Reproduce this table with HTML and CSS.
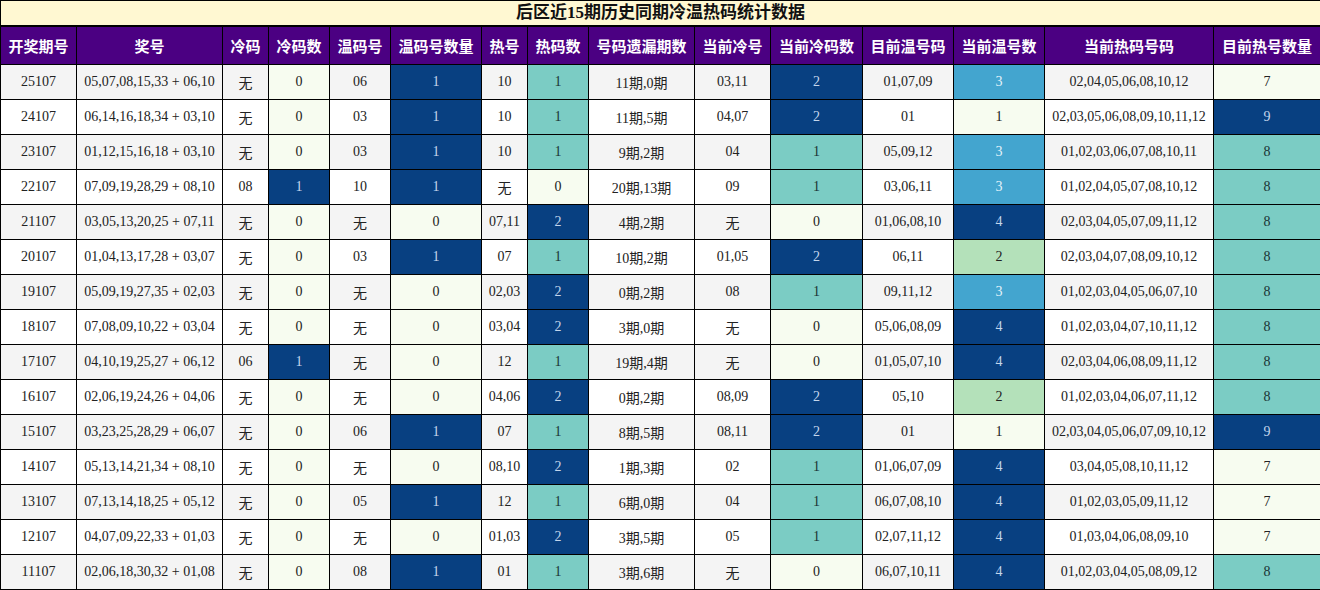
FILE: index.html
```html
<!DOCTYPE html>
<html lang="zh-CN">
<head>
<meta charset="utf-8">
<title>后区近15期历史同期冷温热码统计数据</title>
<link rel="stylesheet" href="styles.css">
</head>
<body>
<table class="stats">
<colgroup>
<col class="w76"><col class="w146"><col class="w46"><col class="w61"><col class="w61"><col class="w91"><col class="w46"><col class="w61"><col class="w106"><col class="w76"><col class="w92"><col class="w91"><col class="w91"><col class="w169"><col class="w107">
</colgroup>
<thead>
<tr class="title-row"><th colspan="15" class="title">后区近15期历史同期冷温热码统计数据</th></tr>
<tr class="head-row">
<th>开奖期号</th><th>奖号</th><th>冷码</th><th>冷码数</th><th>温码号</th><th>温码号数量</th><th>热号</th><th>热码数</th><th>号码遗漏期数</th><th>当前冷号</th><th>当前冷码数</th><th>目前温号码</th><th>当前温号数</th><th>当前热码号码</th><th>目前热号数量</th>
</tr>
</thead>
<tbody>
<tr class="odd"><td>25107</td><td>05,07,08,15,33 + 06,10</td><td>无</td><td class="c0">0</td><td>06</td><td class="c4">1</td><td>10</td><td class="c2">1</td><td>11期,0期</td><td>03,11</td><td class="c4">2</td><td>01,07,09</td><td class="c3">3</td><td>02,04,05,06,08,10,12</td><td class="c0">7</td></tr>
<tr class="even"><td>24107</td><td>06,14,16,18,34 + 03,10</td><td>无</td><td class="c0">0</td><td>03</td><td class="c4">1</td><td>10</td><td class="c2">1</td><td>11期,5期</td><td>04,07</td><td class="c4">2</td><td>01</td><td class="c0">1</td><td>02,03,05,06,08,09,10,11,12</td><td class="c4">9</td></tr>
<tr class="odd"><td>23107</td><td>01,12,15,16,18 + 03,10</td><td>无</td><td class="c0">0</td><td>03</td><td class="c4">1</td><td>10</td><td class="c2">1</td><td>9期,2期</td><td>04</td><td class="c2">1</td><td>05,09,12</td><td class="c3">3</td><td>01,02,03,06,07,08,10,11</td><td class="c2">8</td></tr>
<tr class="even"><td>22107</td><td>07,09,19,28,29 + 08,10</td><td>08</td><td class="c4">1</td><td>10</td><td class="c4">1</td><td>无</td><td class="c0">0</td><td>20期,13期</td><td>09</td><td class="c2">1</td><td>03,06,11</td><td class="c3">3</td><td>01,02,04,05,07,08,10,12</td><td class="c2">8</td></tr>
<tr class="odd"><td>21107</td><td>03,05,13,20,25 + 07,11</td><td>无</td><td class="c0">0</td><td>无</td><td class="c0">0</td><td>07,11</td><td class="c4">2</td><td>4期,2期</td><td>无</td><td class="c0">0</td><td>01,06,08,10</td><td class="c4">4</td><td>02,03,04,05,07,09,11,12</td><td class="c2">8</td></tr>
<tr class="even"><td>20107</td><td>01,04,13,17,28 + 03,07</td><td>无</td><td class="c0">0</td><td>03</td><td class="c4">1</td><td>07</td><td class="c2">1</td><td>10期,2期</td><td>01,05</td><td class="c4">2</td><td>06,11</td><td class="c1">2</td><td>02,03,04,07,08,09,10,12</td><td class="c2">8</td></tr>
<tr class="odd"><td>19107</td><td>05,09,19,27,35 + 02,03</td><td>无</td><td class="c0">0</td><td>无</td><td class="c0">0</td><td>02,03</td><td class="c4">2</td><td>0期,2期</td><td>08</td><td class="c2">1</td><td>09,11,12</td><td class="c3">3</td><td>01,02,03,04,05,06,07,10</td><td class="c2">8</td></tr>
<tr class="even"><td>18107</td><td>07,08,09,10,22 + 03,04</td><td>无</td><td class="c0">0</td><td>无</td><td class="c0">0</td><td>03,04</td><td class="c4">2</td><td>3期,0期</td><td>无</td><td class="c0">0</td><td>05,06,08,09</td><td class="c4">4</td><td>01,02,03,04,07,10,11,12</td><td class="c2">8</td></tr>
<tr class="odd"><td>17107</td><td>04,10,19,25,27 + 06,12</td><td>06</td><td class="c4">1</td><td>无</td><td class="c0">0</td><td>12</td><td class="c2">1</td><td>19期,4期</td><td>无</td><td class="c0">0</td><td>01,05,07,10</td><td class="c4">4</td><td>02,03,04,06,08,09,11,12</td><td class="c2">8</td></tr>
<tr class="even"><td>16107</td><td>02,06,19,24,26 + 04,06</td><td>无</td><td class="c0">0</td><td>无</td><td class="c0">0</td><td>04,06</td><td class="c4">2</td><td>0期,2期</td><td>08,09</td><td class="c4">2</td><td>05,10</td><td class="c1">2</td><td>01,02,03,04,06,07,11,12</td><td class="c2">8</td></tr>
<tr class="odd"><td>15107</td><td>03,23,25,28,29 + 06,07</td><td>无</td><td class="c0">0</td><td>06</td><td class="c4">1</td><td>07</td><td class="c2">1</td><td>8期,5期</td><td>08,11</td><td class="c4">2</td><td>01</td><td class="c0">1</td><td>02,03,04,05,06,07,09,10,12</td><td class="c4">9</td></tr>
<tr class="even"><td>14107</td><td>05,13,14,21,34 + 08,10</td><td>无</td><td class="c0">0</td><td>无</td><td class="c0">0</td><td>08,10</td><td class="c4">2</td><td>1期,3期</td><td>02</td><td class="c2">1</td><td>01,06,07,09</td><td class="c4">4</td><td>03,04,05,08,10,11,12</td><td class="c0">7</td></tr>
<tr class="odd"><td>13107</td><td>07,13,14,18,25 + 05,12</td><td>无</td><td class="c0">0</td><td>05</td><td class="c4">1</td><td>12</td><td class="c2">1</td><td>6期,0期</td><td>04</td><td class="c2">1</td><td>06,07,08,10</td><td class="c4">4</td><td>01,02,03,05,09,11,12</td><td class="c0">7</td></tr>
<tr class="even"><td>12107</td><td>04,07,09,22,33 + 01,03</td><td>无</td><td class="c0">0</td><td>无</td><td class="c0">0</td><td>01,03</td><td class="c4">2</td><td>3期,5期</td><td>05</td><td class="c2">1</td><td>02,07,11,12</td><td class="c4">4</td><td>01,03,04,06,08,09,10</td><td class="c0">7</td></tr>
<tr class="odd"><td>11107</td><td>02,06,18,30,32 + 01,08</td><td>无</td><td class="c0">0</td><td>08</td><td class="c4">1</td><td>01</td><td class="c2">1</td><td>3期,6期</td><td>无</td><td class="c0">0</td><td>06,07,10,11</td><td class="c4">4</td><td>01,02,03,04,05,08,09,12</td><td class="c2">8</td></tr>
</tbody>
</table>
</body>
</html>
```
FILE: styles.css
```css
html, body {
  margin: 0;
  padding: 0;
  background: #ffffff;
}

.stats {
  width: 1320px;
  table-layout: fixed;
  border-collapse: collapse;
  font-family: "Liberation Serif", "Noto Sans CJK SC", serif;
  font-size: 14px;
  color: #222;
}

.w76 { width: 76px; }
.w146 { width: 146px; }
.w46 { width: 46px; }
.w61 { width: 61px; }
.w91 { width: 91px; }
.w92 { width: 92px; }
.w106 { width: 106px; }
.w107 { width: 107px; }
.w169 { width: 169px; }

.stats th,
.stats td {
  border: 1px solid #000;
  text-align: center;
  vertical-align: middle;
  padding: 0;
  white-space: nowrap;
  overflow: hidden;
}

.title-row .title {
  height: 24px;
  background: #fff8d2;
  font-family: "Liberation Serif", "Noto Sans CJK SC", serif;
  font-weight: bold;
  font-size: 17px;
  color: #111;
  border-bottom: 2px solid #000;
  line-height: 24px;
}

.head-row th {
  height: 37px;
  background: #4b0082;
  color: #fff;
  font-family: "Noto Sans CJK SC", sans-serif;
  font-weight: bold;
  font-size: 15px;
}

.stats tbody td {
  height: 34px;
}

.odd td { background: #f4f4f4; }
.even td { background: #ffffff; }

.stats td.c0 { background: #f7fcf0; color: #222; }
.stats td.c1 { background: #b4e1ba; color: #222; }
.stats td.c2 { background: #7bccc4; color: #1a3434; }
.stats td.c3 { background: #43a5cf; color: #e6f3fa; }
.stats td.c4 { background: #084081; color: #c4d6ec; }
```
